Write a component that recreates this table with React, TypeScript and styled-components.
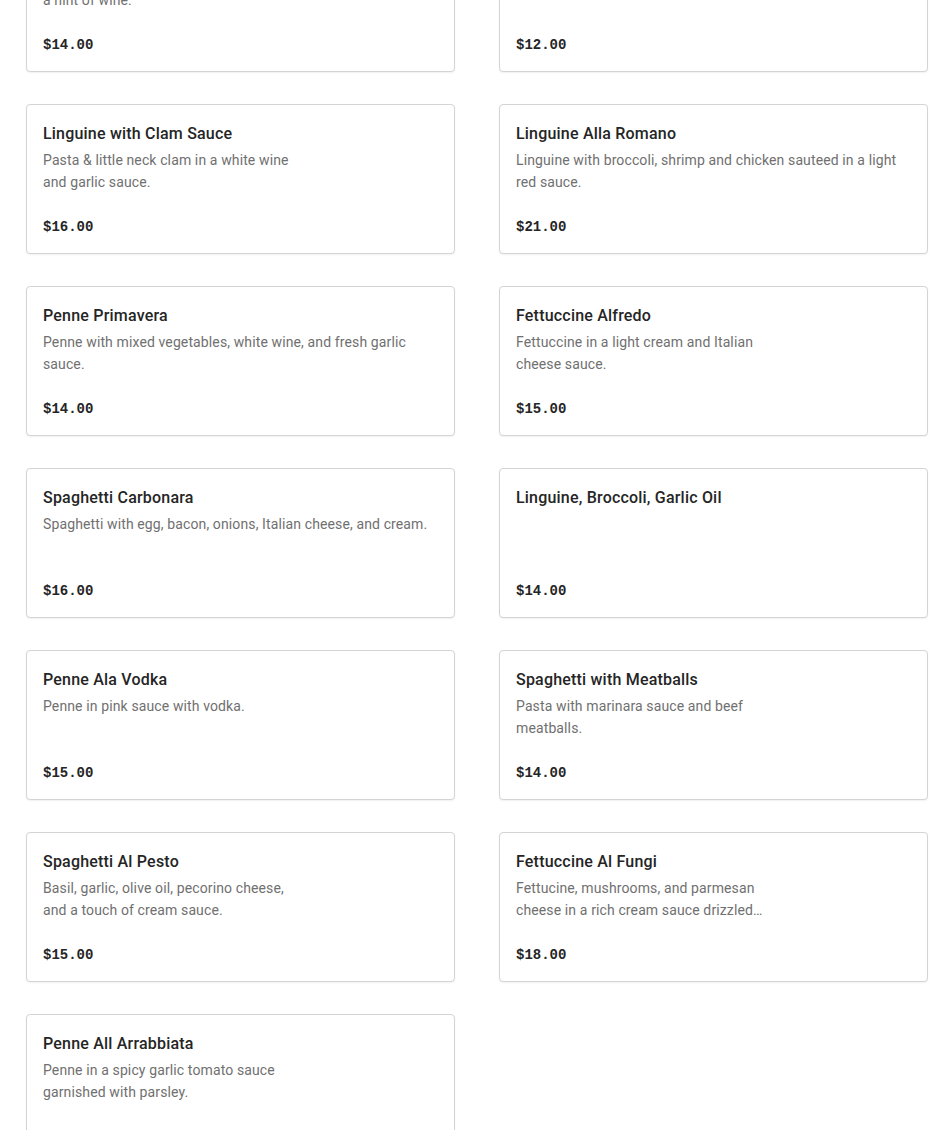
import * as React from 'react'
import styled, { createGlobalStyle } from 'styled-components'

const GlobalStyle = createGlobalStyle`
  html, body {
    margin: 0;
    padding: 0;
    background: #ffffff;
    overflow: hidden;
  }
  body {
    font-family: Roboto, "Noto Sans", Arial, sans-serif;
    -webkit-font-smoothing: antialiased;
  }
`

type Item = {
  id: number
  name: string
  description?: string
  price: string
  narrow?: boolean
}

const items: Item[] = [
  { id: 1, name: 'Shrimp Scampi', description: 'Shrimp sauteed in garlic butter, with a\u00a0hint\u00a0of\u00a0wine.', price: '$14.00', narrow: true },
  { id: 2, name: 'Spaghetti Marinara', description: 'Spaghetti in a classic marinara sauce.', price: '$12.00', narrow: true },
  { id: 3, name: 'Linguine with Clam Sauce', description: 'Pasta & little neck clam in a white wine and garlic sauce.', price: '$16.00', narrow: true },
  { id: 4, name: 'Linguine Alla Romano', description: 'Linguine with broccoli, shrimp and chicken sauteed in a light red sauce.', price: '$21.00' },
  { id: 5, name: 'Penne Primavera', description: 'Penne with mixed vegetables, white wine, and fresh garlic sauce.', price: '$14.00' },
  { id: 6, name: 'Fettuccine Alfredo', description: 'Fettuccine in a light cream and Italian cheese sauce.', price: '$15.00', narrow: true },
  { id: 7, name: 'Spaghetti Carbonara', description: 'Spaghetti with egg, bacon, onions, Italian cheese, and cream.', price: '$16.00' },
  { id: 8, name: 'Linguine, Broccoli, Garlic Oil', price: '$14.00' },
  { id: 9, name: 'Penne Ala Vodka', description: 'Penne in pink sauce with vodka.', price: '$15.00' },
  { id: 10, name: 'Spaghetti with Meatballs', description: 'Pasta with marinara sauce and beef meatballs.', price: '$14.00', narrow: true },
  { id: 11, name: 'Spaghetti Al Pesto', description: 'Basil, garlic, olive oil, pecorino cheese, and a touch of cream sauce.', price: '$15.00', narrow: true },
  { id: 12, name: 'Fettuccine Al Fungi', description: 'Fettucine, mushrooms, and parmesan cheese in a rich cream sauce drizzled with truffle oil.', price: '$18.00', narrow: true },
  { id: 13, name: 'Penne All Arrabbiata', description: 'Penne in a spicy garlic tomato sauce garnished with parsley.', price: '$14.00', narrow: true },
]

// page is shown scrolled part way down the menu, so the first row peeks in from the top
const MenuGrid = styled.ul`
  list-style: none;
  margin: -78px 0 0 0;
  padding: 0 22px 0 26px;
  display: grid;
  grid-template-columns: repeat(2, 429px);
  column-gap: 44px;
  row-gap: 32px;
`

const Card = styled.li`
  box-sizing: border-box;
  height: 150px;
  padding: 17px 16px 16px;
  border: 1px solid #d4d4d4;
  border-radius: 4px;
  box-shadow: 0 1px 2px rgba(0, 0, 0, 0.06);
  background: #ffffff;
  display: flex;
  flex-direction: column;
`

const Title = styled.h3`
  margin: 0;
  font-size: 16px;
  line-height: 24px;
  font-weight: 500;
  letter-spacing: 0.2px;
  color: #252525;
`

const Description = styled.p<{ $narrow?: boolean }>`
  margin: 3px 0 0 0;
  max-width: ${({ $narrow }) => ($narrow ? '258px' : '100%')};
  font-size: 14px;
  line-height: 22px;
  letter-spacing: 0.12px;
  color: #707070;
  display: -webkit-box;
  -webkit-line-clamp: 2;
  -webkit-box-orient: vertical;
  overflow: hidden;
`

const Price = styled.span`
  margin-top: auto;
  font-family: "Liberation Mono", "DejaVu Sans Mono", monospace;
  font-weight: 700;
  font-size: 14px;
  line-height: 20px;
  color: #252525;
`

const App: React.FC = () => {
  return (
    <>
      <GlobalStyle />
      <MenuGrid>
        {items.map(item => (
          <Card key={item.id}>
            <Title>{item.name}</Title>
            {item.description && (
              <Description $narrow={item.narrow}>{item.description}</Description>
            )}
            <Price>{item.price}</Price>
          </Card>
        ))}
      </MenuGrid>
    </>
  )
}

export default App
